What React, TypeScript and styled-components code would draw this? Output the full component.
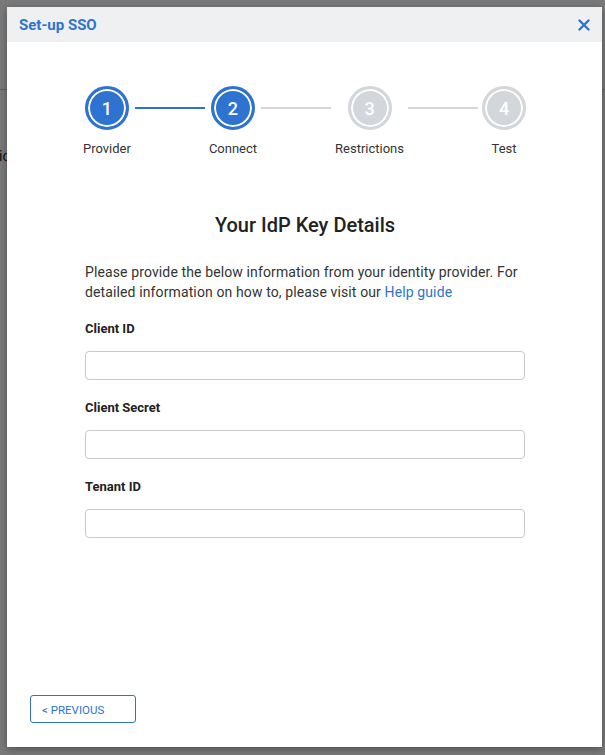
import { Fragment } from "react";
import styled, { createGlobalStyle } from "styled-components";

const BLUE = "#2f73d0";
const GREY = "#d3d6da";

const GlobalStyle = createGlobalStyle`
  html, body {
    margin: 0;
    padding: 0;
    font-family: Roboto, "Liberation Sans", Arial, sans-serif;
  }
  * { box-sizing: border-box; }
`;

const Screen = styled.div`
  position: relative;
  width: 605px;
  height: 755px;
  overflow: hidden;
  background: #fff;
`;

// the page underneath the dialog
const PageBehind = styled.div`
  display: flex;
  flex-direction: column;
`;

const PageTopBar = styled.div`
  height: 90px;
  border-bottom: 1px solid #c9c9c9;
`;

const PageText = styled.div`
  margin: 58px 0 0 -1px;
  font-size: 14px;
  color: #222;
`;

const Overlay = styled.div`
  position: absolute;
  inset: 0;
  background: rgba(0, 0, 0, 0.52);
`;

const Modal = styled.div`
  position: absolute;
  left: 7px;
  top: 7px;
  width: 595px;
  height: 740px;
  background: #fff;
  display: flex;
  flex-direction: column;
  box-shadow: 0 2px 8px rgba(0, 0, 0, 0.35);
`;

const Header = styled.div`
  height: 35px;
  flex-shrink: 0;
  background: #eff0f2;
  display: flex;
  align-items: center;
  justify-content: space-between;
  padding: 0 11px 0 12px;
`;

const Title = styled.div`
  font-size: 15px;
  font-weight: 700;
  color: ${BLUE};
`;

const CloseButton = styled.button`
  border: 0;
  background: none;
  padding: 0;
  width: 14px;
  height: 14px;
  display: flex;
  align-items: center;
  justify-content: center;
  cursor: pointer;
`;

const Body = styled.div`
  flex: 1;
  padding: 44px 77px 0 78px;
  display: flex;
  flex-direction: column;
`;

const Stepper = styled.div`
  display: flex;
  align-items: flex-start;
  margin: 0 -1px 0 -2px;
`;

const Step = styled.div`
  display: flex;
  flex-direction: column;
  align-items: center;
  min-width: 44px;
`;

const Circle = styled.div<{ $active: boolean }>`
  width: 44px;
  height: 44px;
  border-radius: 50%;
  border: 3px solid ${(p) => (p.$active ? BLUE : GREY)};
  background: ${(p) => (p.$active ? BLUE : GREY)};
  box-shadow: inset 0 0 0 2px #fff;
  color: #fff;
  font-size: 18px;
  font-weight: 500;
  display: flex;
  align-items: center;
  justify-content: center;
`;

const StepLabel = styled.div`
  margin-top: 11px;
  font-size: 13px;
  line-height: 16px;
  color: #333;
  white-space: nowrap;
`;

const Connector = styled.div<{ $active: boolean }>`
  flex: 1;
  height: 2px;
  margin: 21px 4px 0;
  background: ${(p) => (p.$active ? BLUE : GREY)};
`;

const Heading = styled.h2`
  margin: 56px 0 0;
  text-align: center;
  font-size: 20px;
  line-height: 24px;
  font-weight: 500;
  color: #222;
`;

const Intro = styled.p`
  margin: 25px 0 0;
  font-size: 14px;
  line-height: 20px;
  letter-spacing: 0.12px;
  color: #333;
`;

const HelpLink = styled.a`
  color: ${BLUE};
  text-decoration: none;
`;

const Field = styled.div`
  margin-top: 19px;
  display: flex;
  flex-direction: column;

  & + & {
    margin-top: 20px;
  }
`;

const Label = styled.label`
  font-size: 13px;
  line-height: 16px;
  font-weight: 700;
  color: #222;
`;

const Input = styled.input`
  margin-top: 14px;
  height: 29px;
  width: 100%;
  border: 1px solid #c9c9c9;
  border-radius: 4px;
  padding: 0 8px;
  font-family: inherit;
  font-size: 14px;
  outline: none;
`;

const Footer = styled.div`
  padding: 0 0 24px 23px;
  display: flex;
`;

const OutlineButton = styled.button`
  width: 106px;
  height: 28px;
  padding: 2px 0 0 11px;
  text-align: left;
  border: 1px solid ${BLUE};
  border-radius: 3px;
  background: #fff;
  color: ${BLUE};
  font-family: inherit;
  font-size: 11.5px;
  text-transform: uppercase;
  cursor: pointer;
`;

const steps = [
  { n: 1, label: "Provider" },
  { n: 2, label: "Connect" },
  { n: 3, label: "Restrictions" },
  { n: 4, label: "Test" },
];
const current = 2;

const fields = ["Client ID", "Client Secret", "Tenant ID"];

const App = () => {
  return (
    <Screen>
      <GlobalStyle />
      <PageBehind>
        <PageTopBar />
        <PageText>ic</PageText>
      </PageBehind>
      <Overlay />
      <Modal>
        <Header>
          <Title>Set-up SSO</Title>
          <CloseButton aria-label="Close">
            <svg width="12" height="12" viewBox="0 0 12 12">
              <path
                d="M1.5 1.5 L10.5 10.5 M10.5 1.5 L1.5 10.5"
                stroke={BLUE}
                strokeWidth="2.4"
                strokeLinecap="round"
              />
            </svg>
          </CloseButton>
        </Header>
        <Body>
          <Stepper>
            {steps.map((s, i) => (
              <Fragment key={s.n}>
                {i > 0 && <Connector $active={s.n <= current} />}
                <Step>
                  <Circle $active={s.n <= current}>{s.n}</Circle>
                  <StepLabel>{s.label}</StepLabel>
                </Step>
              </Fragment>
            ))}
          </Stepper>
          <Heading>Your IdP Key Details</Heading>
          <Intro>
            Please provide the below information from your identity provider. For
            detailed information on how to, please visit our{" "}
            <HelpLink href="#">Help guide</HelpLink>
          </Intro>
          {fields.map((f) => (
            <Field key={f}>
              <Label>{f}</Label>
              <Input type="text" />
            </Field>
          ))}
        </Body>
        <Footer>
          <OutlineButton>&lt; Previous</OutlineButton>
        </Footer>
      </Modal>
    </Screen>
  );
};

export default App;
